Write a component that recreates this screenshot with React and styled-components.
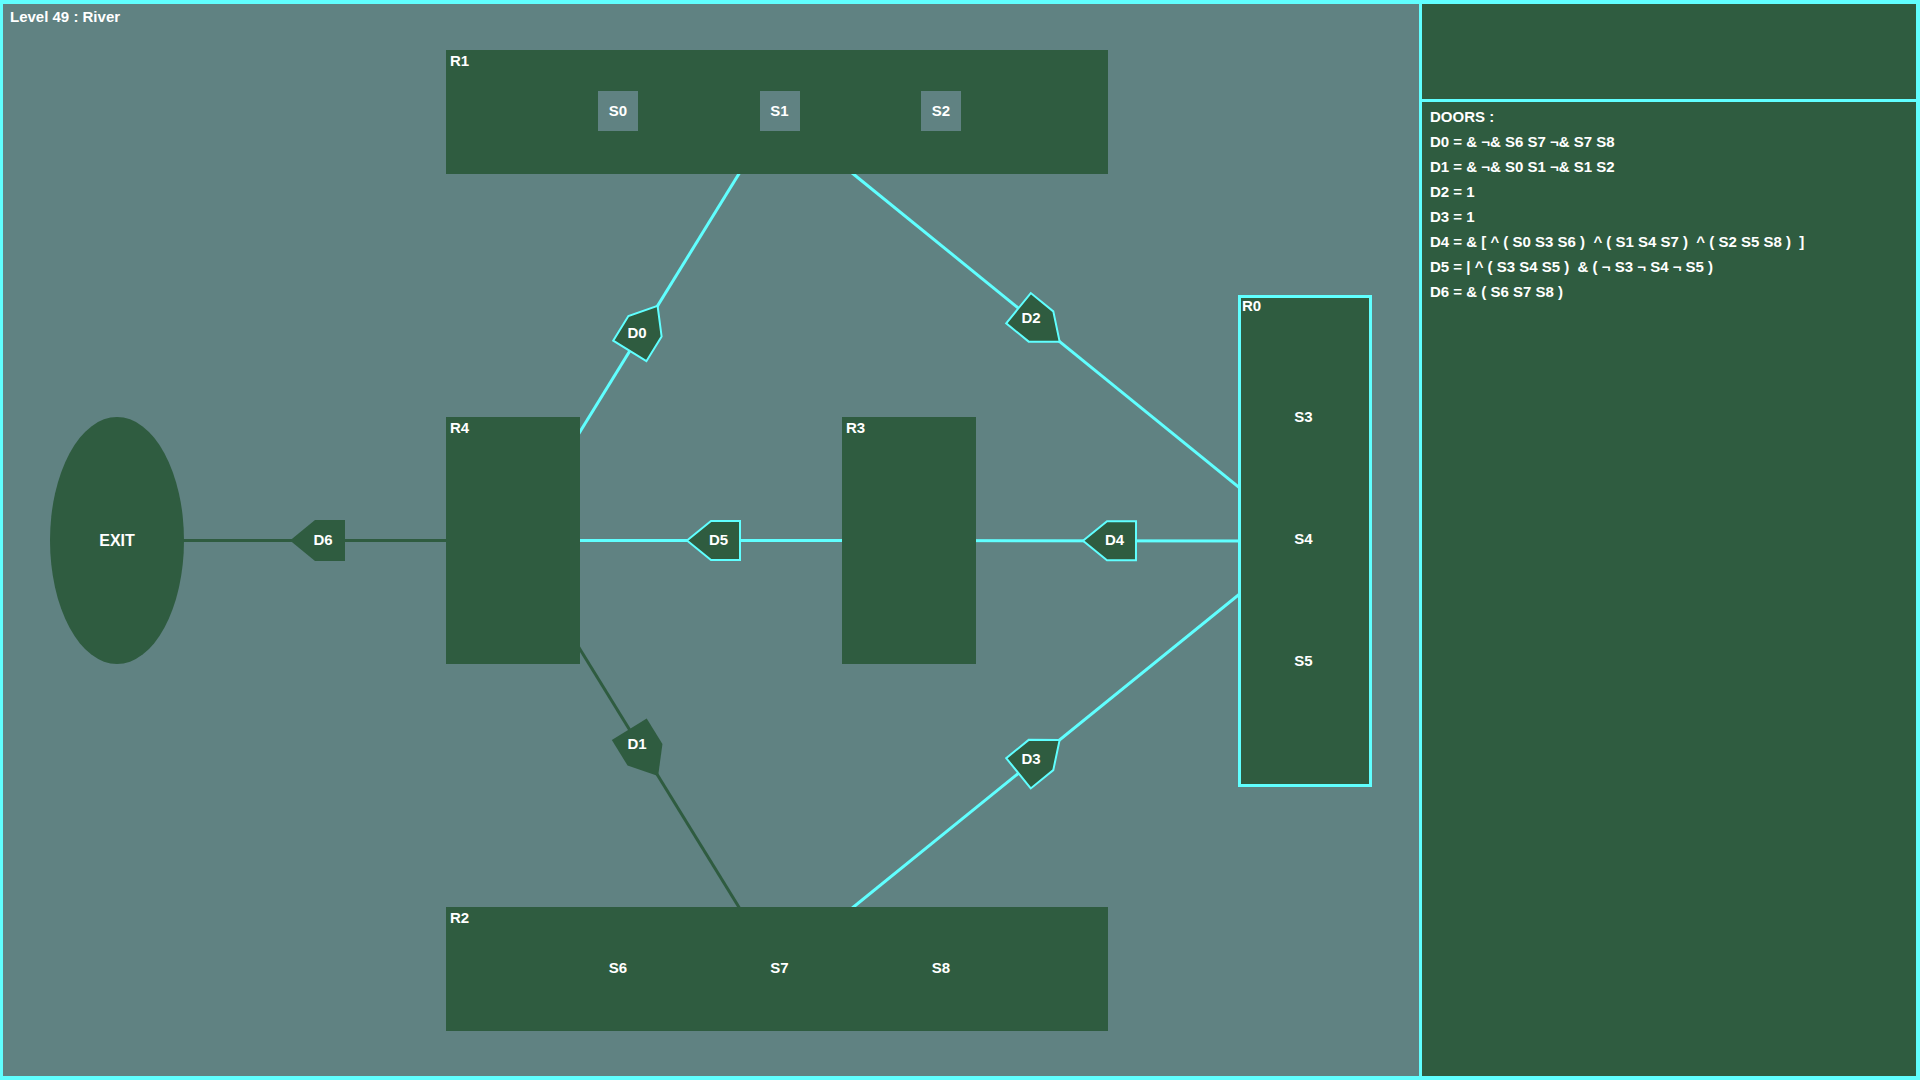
import React from "react";
import styled, { createGlobalStyle, css } from "styled-components";

const CYAN = "#60ffff";
const BG = "#608282";
const GREEN = "#2f5c40";
const INK = "#ffffff";
const OX = 3;
const OY = 4;

const GlobalStyle = createGlobalStyle`
  html, body {
    margin: 0;
    padding: 0;
    background: ${CYAN};
  }
  body {
    font-family: "Liberation Sans", Arial, sans-serif;
  }
`;

const Screen = styled.div`
  width: 1920px;
  height: 1080px;
  box-sizing: border-box;
  padding: 4px 4px 4px 3px;
  background: ${CYAN};
  display: grid;
  grid-template-columns: 1416px 1fr;
  column-gap: 3px;
  overflow: hidden;
  font-family: "Liberation Sans", Arial, sans-serif;
  font-weight: 700;
  color: ${INK};
`;

const GameArea = styled.div`
  position: relative;
  background: ${BG};
  overflow: hidden;
`;

const Title = styled.div`
  position: absolute;
  left: 7px;
  top: 4px;
  font-size: 15px;
  line-height: 17px;
  white-space: pre;
`;

const Wires = styled.svg`
  position: absolute;
  left: 0;
  top: 0;
`;

const Link = styled.line`
  stroke: ${(p) => (p.$open ? CYAN : GREEN)};
  stroke-width: 3;
`;

const DoorShape = styled.polygon`
  fill: ${GREEN};
  stroke: ${(p) => (p.$open ? CYAN : "none")};
  stroke-width: 2;
  stroke-linejoin: miter;
`;

const DoorText = styled.text`
  font-family: "Liberation Sans", Arial, sans-serif;
  font-weight: 700;
  font-size: 15px;
  fill: ${INK};
  text-anchor: middle;
`;

const rowLayout = css`
  flex-direction: row;
  padding: 0 0 2px 152px;
  gap: 121.5px;
`;

const columnLayout = css`
  flex-direction: column;
  padding: 102px 3px 0 0;
  gap: 82px;
`;

/* A room is a node on the level's free canvas: its place is the content. */
const Room = styled.div`
  position: absolute;
  left: ${(p) => p.$x - OX}px;
  top: ${(p) => p.$y - OY}px;
  width: ${(p) => p.$w}px;
  height: ${(p) => p.$h}px;
  box-sizing: border-box;
  background: ${GREEN};
  box-shadow: ${(p) => (p.$current ? `inset 0 0 0 3px ${CYAN}` : "none")};
  display: flex;
  align-items: center;
  ${(p) => (p.$layout === "row" ? rowLayout : p.$layout === "column" ? columnLayout : "")}
`;

const RoomLabel = styled.span`
  position: absolute;
  left: 4px;
  top: 2px;
  font-size: 15px;
  line-height: 17px;
`;

const Sensor = styled.div`
  flex: none;
  width: 40px;
  height: 40px;
  box-sizing: border-box;
  padding-bottom: 2px;
  display: flex;
  align-items: center;
  justify-content: center;
  background: ${(p) => (p.$lit ? BG : "transparent")};
  font-size: 15px;
  line-height: 17px;
`;

const ExitNode = styled.div`
  position: absolute;
  left: ${(p) => p.$x - OX}px;
  top: ${(p) => p.$y - OY}px;
  width: ${(p) => p.$w}px;
  height: ${(p) => p.$h}px;
  border-radius: 50%;
  background: ${GREEN};
  display: flex;
  align-items: center;
  justify-content: center;
  font-size: 16px;
  line-height: 18px;
`;

const SidePanel = styled.div`
  display: grid;
  grid-template-rows: 95px 1fr;
  row-gap: 3px;
`;

const InfoBox = styled.div`
  background: ${GREEN};
`;

const DoorList = styled.div`
  background: ${GREEN};
  padding: 2px 8px 0 8px;
  display: flex;
  flex-direction: column;
`;

const DoorLine = styled.div`
  font-size: 15px;
  line-height: 25px;
  white-space: pre;
`;

const rooms = {
  R1: { x: 446, y: 50, w: 662, h: 124, layout: "row" },
  R2: { x: 446, y: 907, w: 662, h: 124, layout: "row" },
  R4: { x: 446, y: 417, w: 134, h: 247 },
  R3: { x: 842, y: 417, w: 134, h: 247 },
  R0: { x: 1238, y: 295, w: 134, h: 492, current: true, layout: "column" },
  EXIT: { x: 50, y: 417, w: 134, h: 247 },
};

const sensors = {
  R1: [
    { id: "S0", lit: true },
    { id: "S1", lit: true },
    { id: "S2", lit: true },
  ],
  R2: [{ id: "S6" }, { id: "S7" }, { id: "S8" }],
  R0: [{ id: "S3" }, { id: "S4" }, { id: "S5" }],
};

const doors = [
  { id: "D0", tip: "R1", from: "R4", open: true, lx: 637, ly: 338 },
  { id: "D1", tip: "R2", from: "R4", open: false, lx: 637, ly: 749 },
  { id: "D2", tip: "R0", from: "R1", open: true, lx: 1031, ly: 323 },
  { id: "D3", tip: "R0", from: "R2", open: true, lx: 1031, ly: 764 },
  { id: "D4", tip: "R3", from: "R0", open: true, lx: 1114.5, ly: 544.5 },
  { id: "D5", tip: "R4", from: "R3", open: true, lx: 718.5, ly: 544.5 },
  { id: "D6", tip: "EXIT", from: "R4", open: false, lx: 323, ly: 544.5 },
];

const doorRules = [
  "DOORS :",
  "D0 = & ¬& S6 S7 ¬& S7 S8",
  "D1 = & ¬& S0 S1 ¬& S1 S2",
  "D2 = 1",
  "D3 = 1",
  "D4 = & [ ^ ( S0 S3 S6 )  ^ ( S1 S4 S7 )  ^ ( S2 S5 S8 )  ]",
  "D5 = | ^ ( S3 S4 S5 )  & ( ¬ S3 ¬ S4 ¬ S5 )",
  "D6 = & ( S6 S7 S8 )",
];

const OPEN_PTS = "-24,0 0,-19.5 29,-19.5 29,19.5 0,19.5";
const CLOSED_PTS = "-25,0 0,-20.5 30,-20.5 30,20.5 0,20.5";

const center = (r) => ({ x: r.x + r.w / 2, y: r.y + r.h / 2 });

function Door({ door }) {
  const t = center(rooms[door.tip]);
  const f = center(rooms[door.from]);
  const mx = (t.x + f.x) / 2;
  const my = (t.y + f.y) / 2;
  const deg = (Math.atan2(f.y - t.y, f.x - t.x) * 180) / Math.PI;
  return (
    <g>
      <g transform={`translate(${mx} ${my}) rotate(${deg})`}>
        <DoorShape $open={door.open} points={door.open ? OPEN_PTS : CLOSED_PTS} />
      </g>
      <DoorText x={door.lx} y={door.ly}>
        {door.id}
      </DoorText>
    </g>
  );
}

export default function App() {
  return (
    <>
      <GlobalStyle />
      <Screen>
        <GameArea>
          <Wires width="1416" height="1072" viewBox={`${OX} ${OY} 1416 1072`}>
            {doors.map((d) => {
              const a = center(rooms[d.tip]);
              const b = center(rooms[d.from]);
              return <Link key={`l-${d.id}`} $open={d.open} x1={a.x} y1={a.y} x2={b.x} y2={b.y} />;
            })}
            {doors.map((d) => (
              <Door key={d.id} door={d} />
            ))}
          </Wires>

          {["R1", "R2", "R4", "R3", "R0"].map((id) => {
            const r = rooms[id];
            return (
              <Room
                key={id}
                $x={r.x}
                $y={r.y}
                $w={r.w}
                $h={r.h}
                $current={r.current}
                $layout={r.layout}
              >
                <RoomLabel>{id}</RoomLabel>
                {(sensors[id] || []).map((s) => (
                  <Sensor key={s.id} $lit={s.lit}>
                    {s.id}
                  </Sensor>
                ))}
              </Room>
            );
          })}

          <ExitNode $x={rooms.EXIT.x} $y={rooms.EXIT.y} $w={rooms.EXIT.w} $h={rooms.EXIT.h}>
            EXIT
          </ExitNode>

          <Title>Level 49 : River</Title>
        </GameArea>

        <SidePanel>
          <InfoBox />
          <DoorList>
            {doorRules.map((line) => (
              <DoorLine key={line}>{line}</DoorLine>
            ))}
          </DoorList>
        </SidePanel>
      </Screen>
    </>
  );
}
